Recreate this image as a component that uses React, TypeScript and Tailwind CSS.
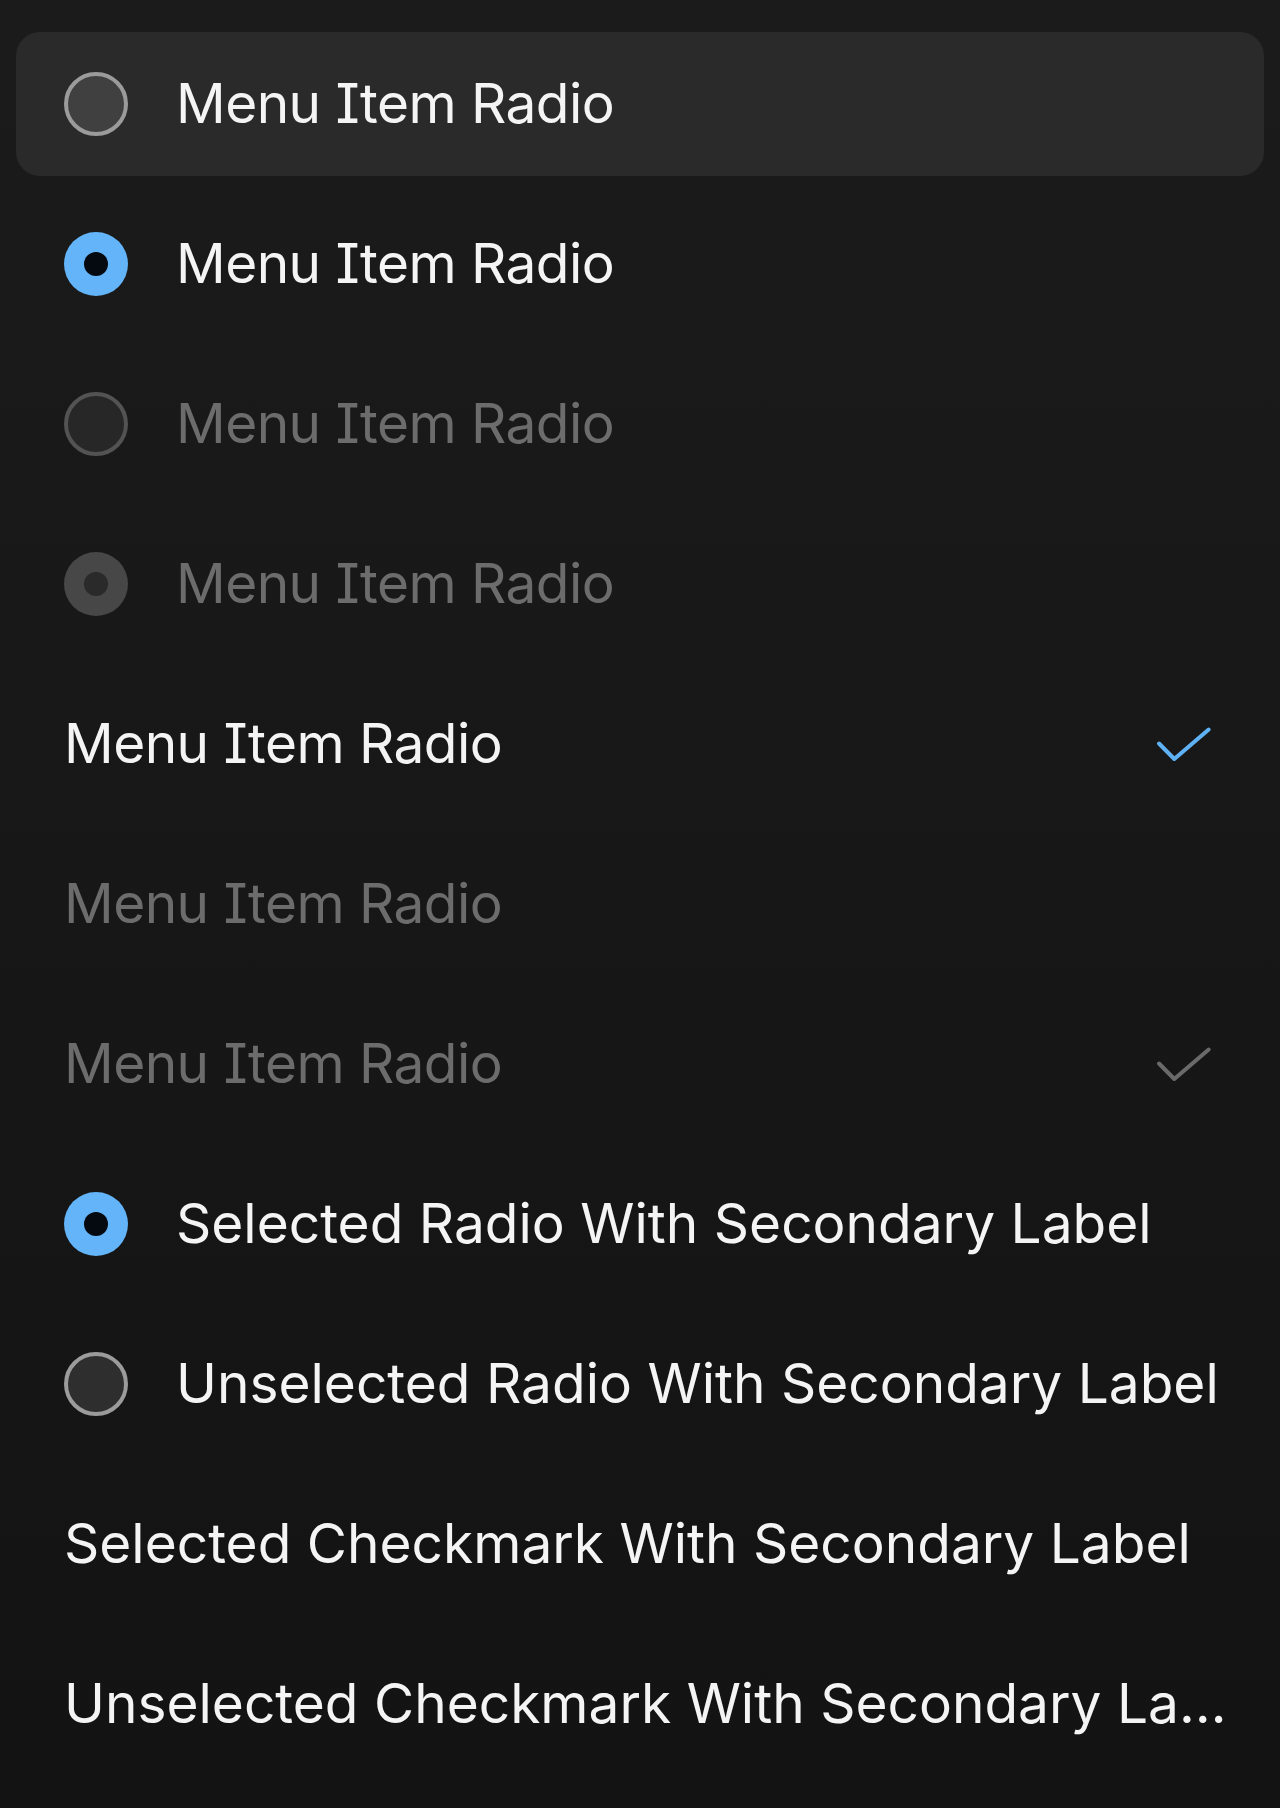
import React from "react";

type RadioKind = "hover" | "selected" | "disabled" | "disabledSelected" | "unselected";

function Radio({ kind }: { kind: RadioKind }) {
  if (kind === "selected") {
    return (
      <div className="flex h-16 w-16 shrink-0 items-center justify-center rounded-full bg-[#63b4f8]">
        <div className="h-[24px] w-[24px] rounded-full bg-[#050a10]" />
      </div>
    );
  }
  if (kind === "disabledSelected") {
    return (
      <div className="flex h-16 w-16 shrink-0 items-center justify-center rounded-full bg-[#474747]">
        <div className="h-[24px] w-[24px] rounded-full bg-[#2a2a2a]" />
      </div>
    );
  }
  if (kind === "disabled") {
    return <div className="h-16 w-16 shrink-0 rounded-full border-4 border-[#535353] bg-[#272727]" />;
  }
  if (kind === "hover") {
    return <div className="h-16 w-16 shrink-0 rounded-full border-4 border-[#9b9b9b] bg-[#404040]" />;
  }
  return <div className="h-16 w-16 shrink-0 rounded-full border-4 border-[#9b9b9b] bg-[#2e2e2e]" />;
}

function Check({ color }: { color: string }) {
  return (
    <svg width="64" height="64" viewBox="0 0 64 64" className="mr-3 shrink-0" fill="none">
      <polyline
        points="7,31.5 22.3,47 56.7,17.5"
        stroke={color}
        strokeWidth="4"
        strokeLinecap="round"
        strokeLinejoin="round"
      />
    </svg>
  );
}

const textBase =
  "min-w-0 flex-1 truncate text-[55px] leading-[1.3] font-normal [font-family:Inter,'Noto_Sans',sans-serif] [font-feature-settings:'cv08']";

const row = "flex h-[144px] items-center gap-12 pl-12 pr-[36px]";

export default function App() {
  return (
    <div className="flex min-h-[1808px] w-full flex-col gap-4 bg-gradient-to-b from-[#1b1b1b] to-[#131313] px-4 py-8">
      {/* 1 hover */}
      <div className={`${row} rounded-[24px] bg-[#2a2a2a]`}>
        <Radio kind="hover" />
        <span className={`${textBase} text-[#f4f4f4] tracking-[-0.01em]`}>Menu Item Radio</span>
      </div>
      {/* 2 selected */}
      <div className={row}>
        <Radio kind="selected" />
        <span className={`${textBase} text-[#f4f4f4] tracking-[-0.01em]`}>Menu Item Radio</span>
      </div>
      {/* 3 disabled */}
      <div className={row}>
        <Radio kind="disabled" />
        <span className={`${textBase} text-[#6c6c6c] tracking-[-0.01em]`}>Menu Item Radio</span>
      </div>
      {/* 4 disabled selected */}
      <div className={row}>
        <Radio kind="disabledSelected" />
        <span className={`${textBase} text-[#6c6c6c] tracking-[-0.01em]`}>Menu Item Radio</span>
      </div>
      {/* 5 check selected */}
      <div className={row}>
        <span className={`${textBase} text-[#f4f4f4] tracking-[-0.01em]`}>Menu Item Radio</span>
        <Check color="#5fb1f5" />
      </div>
      {/* 6 disabled */}
      <div className={row}>
        <span className={`${textBase} text-[#6c6c6c] tracking-[-0.01em]`}>Menu Item Radio</span>
      </div>
      {/* 7 disabled check */}
      <div className={row}>
        <span className={`${textBase} text-[#6c6c6c] tracking-[-0.01em]`}>Menu Item Radio</span>
        <Check color="#6a6a6a" />
      </div>
      {/* 8 selected with secondary */}
      <div className={row}>
        <Radio kind="selected" />
        <span className={`${textBase} text-[#f4f4f4] tracking-normal`}>Selected Radio With Secondary Label</span>
      </div>
      {/* 9 unselected with secondary */}
      <div className={row}>
        <Radio kind="unselected" />
        <span className={`${textBase} text-[#f4f4f4] tracking-normal`}>Unselected Radio With Secondary Label</span>
      </div>
      {/* 10 */}
      <div className={row}>
        <span className={`${textBase} text-[#f4f4f4] tracking-normal`}>Selected Checkmark With Secondary Label</span>
      </div>
      {/* 11 */}
      <div className={row}>
        <span className={`${textBase} text-[#f4f4f4] tracking-normal`}>Unselected Checkmark With Secondary Label</span>
      </div>
    </div>
  );
}
